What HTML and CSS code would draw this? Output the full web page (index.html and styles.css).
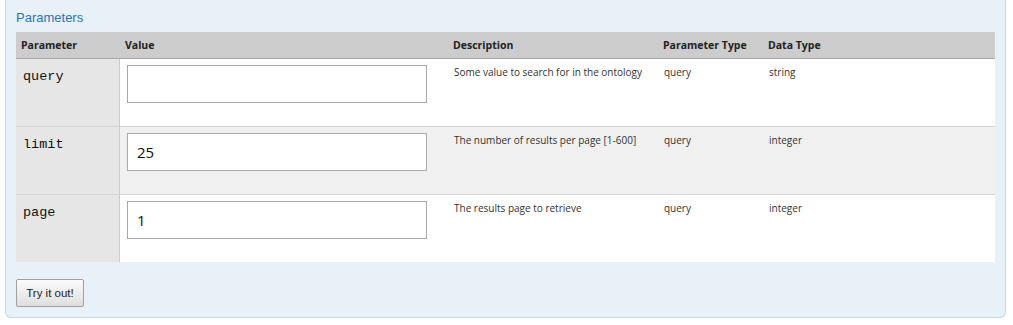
FILE: index.html
```html
<!DOCTYPE html>
<html lang="en">
  <head>
    <meta charset="UTF-8" />
    <meta name="viewport" content="width=device-width, initial-scale=1.0" />
    <title>Parameters</title>
    <link rel="stylesheet" href="styles.css">
  </head>
  <body>
    <div class="operation-content">
      <h4>Parameters</h4>

      <table class="params">
        <colgroup>
          <col class="col-name" />
          <col class="col-value" />
          <col class="col-desc" />
          <col class="col-ptype" />
          <col class="col-dtype" />
        </colgroup>
        <thead>
          <tr>
            <th>Parameter</th>
            <th>Value</th>
            <th>Description</th>
            <th>Parameter Type</th>
            <th>Data Type</th>
          </tr>
        </thead>
        <tbody>
          <tr>
            <td class="code">query</td>
            <td class="value"><input type="text" class="param-input" value="" /></td>
            <td>Some value to search for in the ontology</td>
            <td>query</td>
            <td>string</td>
          </tr>
          <tr>
            <td class="code">limit</td>
            <td class="value"><input type="text" class="param-input" value="25" /></td>
            <td>The number of results per page [1-600]</td>
            <td>query</td>
            <td>integer</td>
          </tr>
          <tr>
            <td class="code">page</td>
            <td class="value"><input type="text" class="param-input" value="1" /></td>
            <td>The results page to retrieve</td>
            <td>query</td>
            <td>integer</td>
          </tr>
        </tbody>
      </table>

      <button type="button" class="try-btn">Try it out!</button>
    </div>
  </body>
</html>
```

FILE: styles.css
```css
body {
  margin: 0;
  padding: 0 7px 0 5px;
  background: #ffffff;
  font-family: "Open Sans", sans-serif;
}
.operation-content {
  background-color: #e8f1f8;
  border: 1px solid #c3d9ec;
  border-top: none;
  border-radius: 0 0 6px 6px;
  padding: 10px 10px 10px 10px;
}
h4 {
  margin: 0 0 6px 0;
  font-family: "Liberation Sans", Arial, sans-serif;
  font-size: 13px;
  line-height: 16px;
  font-weight: normal;
  color: #2b73b6;
}
.params {
  width: 100%;
  table-layout: fixed;
  border-collapse: separate;
  border-spacing: 0;
}
.col-name {
  width: 104px;
}
.col-value {
  width: 328px;
}
.col-desc {
  width: 210px;
}
.col-ptype {
  width: 105px;
}
th {
  text-align: left;
  background-color: #cccccc;
  color: #222222;
  font-size: 10.5px;
  font-weight: 700;
  line-height: 14px;
  padding: 6px 5px;
  border-bottom: 1px solid #a8a8a8;
}
td {
  vertical-align: top;
  font-size: 10px;
  line-height: 14px;
  color: #333333;
  padding: 6px 6px;
  border-bottom: 1px solid #d6d6d6;
  background-color: #ffffff;
}
tbody tr:nth-child(even) td {
  background-color: #f0f0f0;
}
tbody tr:last-child td {
  border-bottom: none;
}
td.code {
  font-family: "Liberation Mono", monospace;
  font-size: 13.5px;
  line-height: 16px;
  padding-left: 7px;
  padding-top: 10px;
  color: #111111;
  background-color: #e6e6e6 !important;
  border-right: 1px solid #cccccc;
}
td.value {
  padding-left: 7px;
}
.param-input {
  display: block;
  box-sizing: border-box;
  width: 300px;
  height: 38px;
  margin: 0 0 17px 0;
  padding: 0 9px;
  border: 1px solid #a9a9a9;
  font-family: "Open Sans", sans-serif;
  font-size: 15px;
  color: #111111;
  background: #ffffff;
}
.try-btn {
  display: block;
  margin-top: 17px;
  width: 68px;
  height: 28px;
  padding: 0;
  font-family: "Liberation Sans", Arial, sans-serif;
  font-size: 11.5px;
  color: #222222;
  background: linear-gradient(#fbfbfb, #dedede);
  border: 1px solid #a0a0a0;
  border-radius: 2px;
  cursor: pointer;
}
```
